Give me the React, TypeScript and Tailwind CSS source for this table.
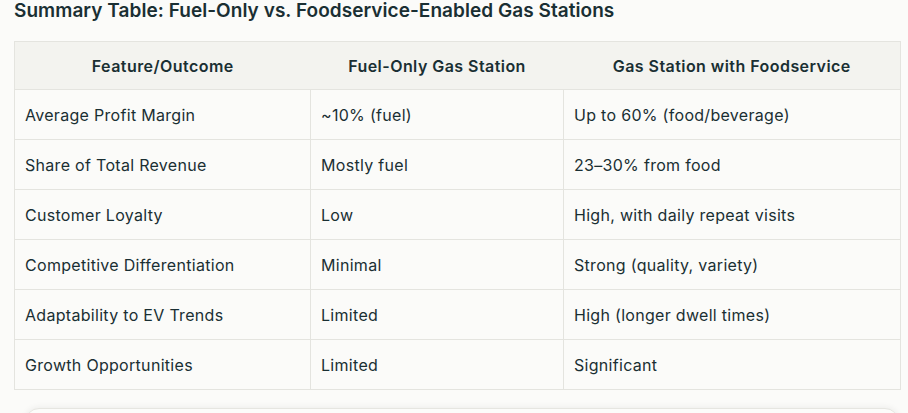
import React from "react";

const rows = [
  ["Average Profit Margin", "~10% (fuel)", "Up to 60% (food/beverage)"],
  ["Share of Total Revenue", "Mostly fuel", "23–30% from food"],
  ["Customer Loyalty", "Low", "High, with daily repeat visits"],
  ["Competitive Differentiation", "Minimal", "Strong (quality, variety)"],
  ["Adaptability to EV Trends", "Limited", "High (longer dwell times)"],
  ["Growth Opportunities", "Limited", "Significant"],
];

export default function App() {
  return (
    <div
      className="w-[908px] h-[413px] overflow-hidden bg-[#fbfbf9] text-[#1a2f33]"
      style={{ fontFamily: "Inter, 'Liberation Sans', sans-serif" }}
    >
      <div className="pl-[14px] pr-[7px]">
        <h2 className="text-[19px] leading-[21px] font-semibold tracking-[0.05px]">
          Summary Table: Fuel-Only vs. Foodservice-Enabled Gas Stations
        </h2>
        <table className="mt-[20px] w-[887px] border-collapse border border-[#e4e4df] text-[16px] tracking-[0.3px]">
          <thead>
            <tr className="bg-[#f3f3ef] h-[48px]">
              <th className="w-[296px] font-semibold text-center tracking-[0.45px]">Feature/Outcome</th>
              <th className="w-[253px] font-semibold text-center tracking-[0.45px]">Fuel-Only Gas Station</th>
              <th className="font-semibold text-center tracking-[0.45px]">Gas Station with Foodservice</th>
            </tr>
          </thead>
          <tbody>
            {rows.map((r, i) => (
              <tr key={i} className="h-[50px] border-t border-[#e4e4df]">
                {r.map((c, j) => (
                  <td
                    key={j}
                    className={`px-[10px] font-normal ${j > 0 ? "border-l border-[#e4e4df]" : ""}`}
                  >
                    {c}
                  </td>
                ))}
              </tr>
            ))}
          </tbody>
        </table>
      </div>
      <div className="ml-[25px] mr-[9px] mt-[18px] h-[40px] rounded-t-[14px] border border-[#e6e6e1] bg-[#fcfcfa] shadow-[0_-1px_6px_rgba(0,0,0,0.06)]" />
    </div>
  );
}
